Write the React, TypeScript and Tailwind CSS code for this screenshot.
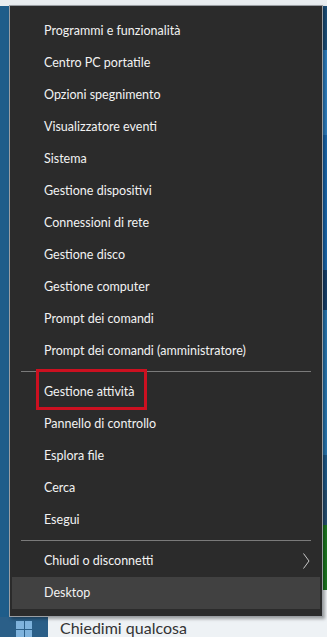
type Entry = { label: string; sep?: boolean; sub?: boolean; active?: boolean; marked?: boolean };

const entries: Entry[] = [
  { label: 'Programmi e funzionalità' },
  { label: 'Centro PC portatile' },
  { label: 'Opzioni spegnimento' },
  { label: 'Visualizzatore eventi' },
  { label: 'Sistema' },
  { label: 'Gestione dispositivi' },
  { label: 'Connessioni di rete' },
  { label: 'Gestione disco' },
  { label: 'Gestione computer' },
  { label: 'Prompt dei comandi' },
  { label: 'Prompt dei comandi (amministratore)' },
  { label: '', sep: true },
  { label: 'Gestione attività', marked: true },
  { label: 'Pannello di controllo' },
  { label: 'Esplora file' },
  { label: 'Cerca' },
  { label: 'Esegui' },
  { label: '', sep: true },
  { label: 'Chiudi o disconnetti', sub: true },
  { label: 'Desktop', active: true },
];

export default function App() {
  return (
    <div
      className="relative w-[327px] h-[637px] overflow-hidden bg-[#1f5d8a]"
      style={{ fontFamily: 'Lato, "Noto Sans", sans-serif' }}
    >
      {/* desktop dietro al menu */}
      <div className="flex flex-col h-full">
        <div className="h-[6px] bg-[#e9edf0]" />
        <div className="flex-1 flex">
          <div className="flex-1" />
          <div className="w-[5px] flex flex-col">
            <div className="h-[44px] bg-[#1b4f7a]" />
            <div className="h-[85px] bg-[#2f80c2]" />
            <div className="h-[135px] bg-[#1a68ae]" />
            <div className="h-[40px] bg-[#163f6a]" />
            <div className="h-[145px] bg-[#2a78b2]" />
            <div className="h-[35px] bg-[#1e5a8a]" />
            <div className="h-[35px] bg-[#254f72]" />
            <div className="h-[65px] bg-[#1d7a21]" />
            <div className="flex-1 bg-[#eef2f5]" />
          </div>
        </div>
        {/* barra delle applicazioni */}
        <div className="h-[20px] flex">
          <div className="w-[48px] bg-[#2b5f88] flex items-end pl-[16px]">
            <div className="grid grid-cols-2 gap-[1px] w-[16px] h-[16px]">
              <div className="bg-[#7fb3dd]" />
              <div className="bg-[#7fb3dd]" />
              <div className="bg-[#7fb3dd]" />
              <div className="bg-[#7fb3dd]" />
            </div>
          </div>
          <div className="flex-1 bg-[#eef2f5] pl-[12px] text-[16px] leading-[20px] text-[#333] pt-[1px]">
            Chiedimi qualcosa
          </div>
        </div>
      </div>

      {/* menu Win+X */}
      <div className="absolute left-[9px] top-[5px] w-[314px] h-[612px] bg-[#2b2b2b] border border-[#9a9ea3] shadow-[2px_2px_3px_rgba(0,0,0,0.35)] pt-[9px] px-[2px] text-[12.5px] text-[#f2f2f2]">
        {entries.map((e, i) =>
          e.sep ? (
            <div key={i} className="h-[9px] flex items-center px-[9px]">
              <div className="h-px w-full bg-[#7a7a7a]" />
            </div>
          ) : (
            <div
              key={i}
              className={`relative h-[32px] flex items-center pl-[32px] pr-[10px] ${e.active ? 'bg-[#414141]' : ''}`}
            >
              <span className="flex-1">{e.label}</span>
              {e.sub && (
                <svg width="7" height="16" viewBox="0 0 7 16" className="text-[#c8c8c8]">
                  <polyline points="0.5,0.5 6,8 0.5,15.5" fill="none" stroke="currentColor" strokeWidth="1" />
                </svg>
              )}
              {e.marked && (
                <div className="absolute left-[24px] top-[-7px] w-[111px] h-[41px] border-[3px] border-[#cc1020]" />
              )}
            </div>
          )
        )}
      </div>
    </div>
  );
}
